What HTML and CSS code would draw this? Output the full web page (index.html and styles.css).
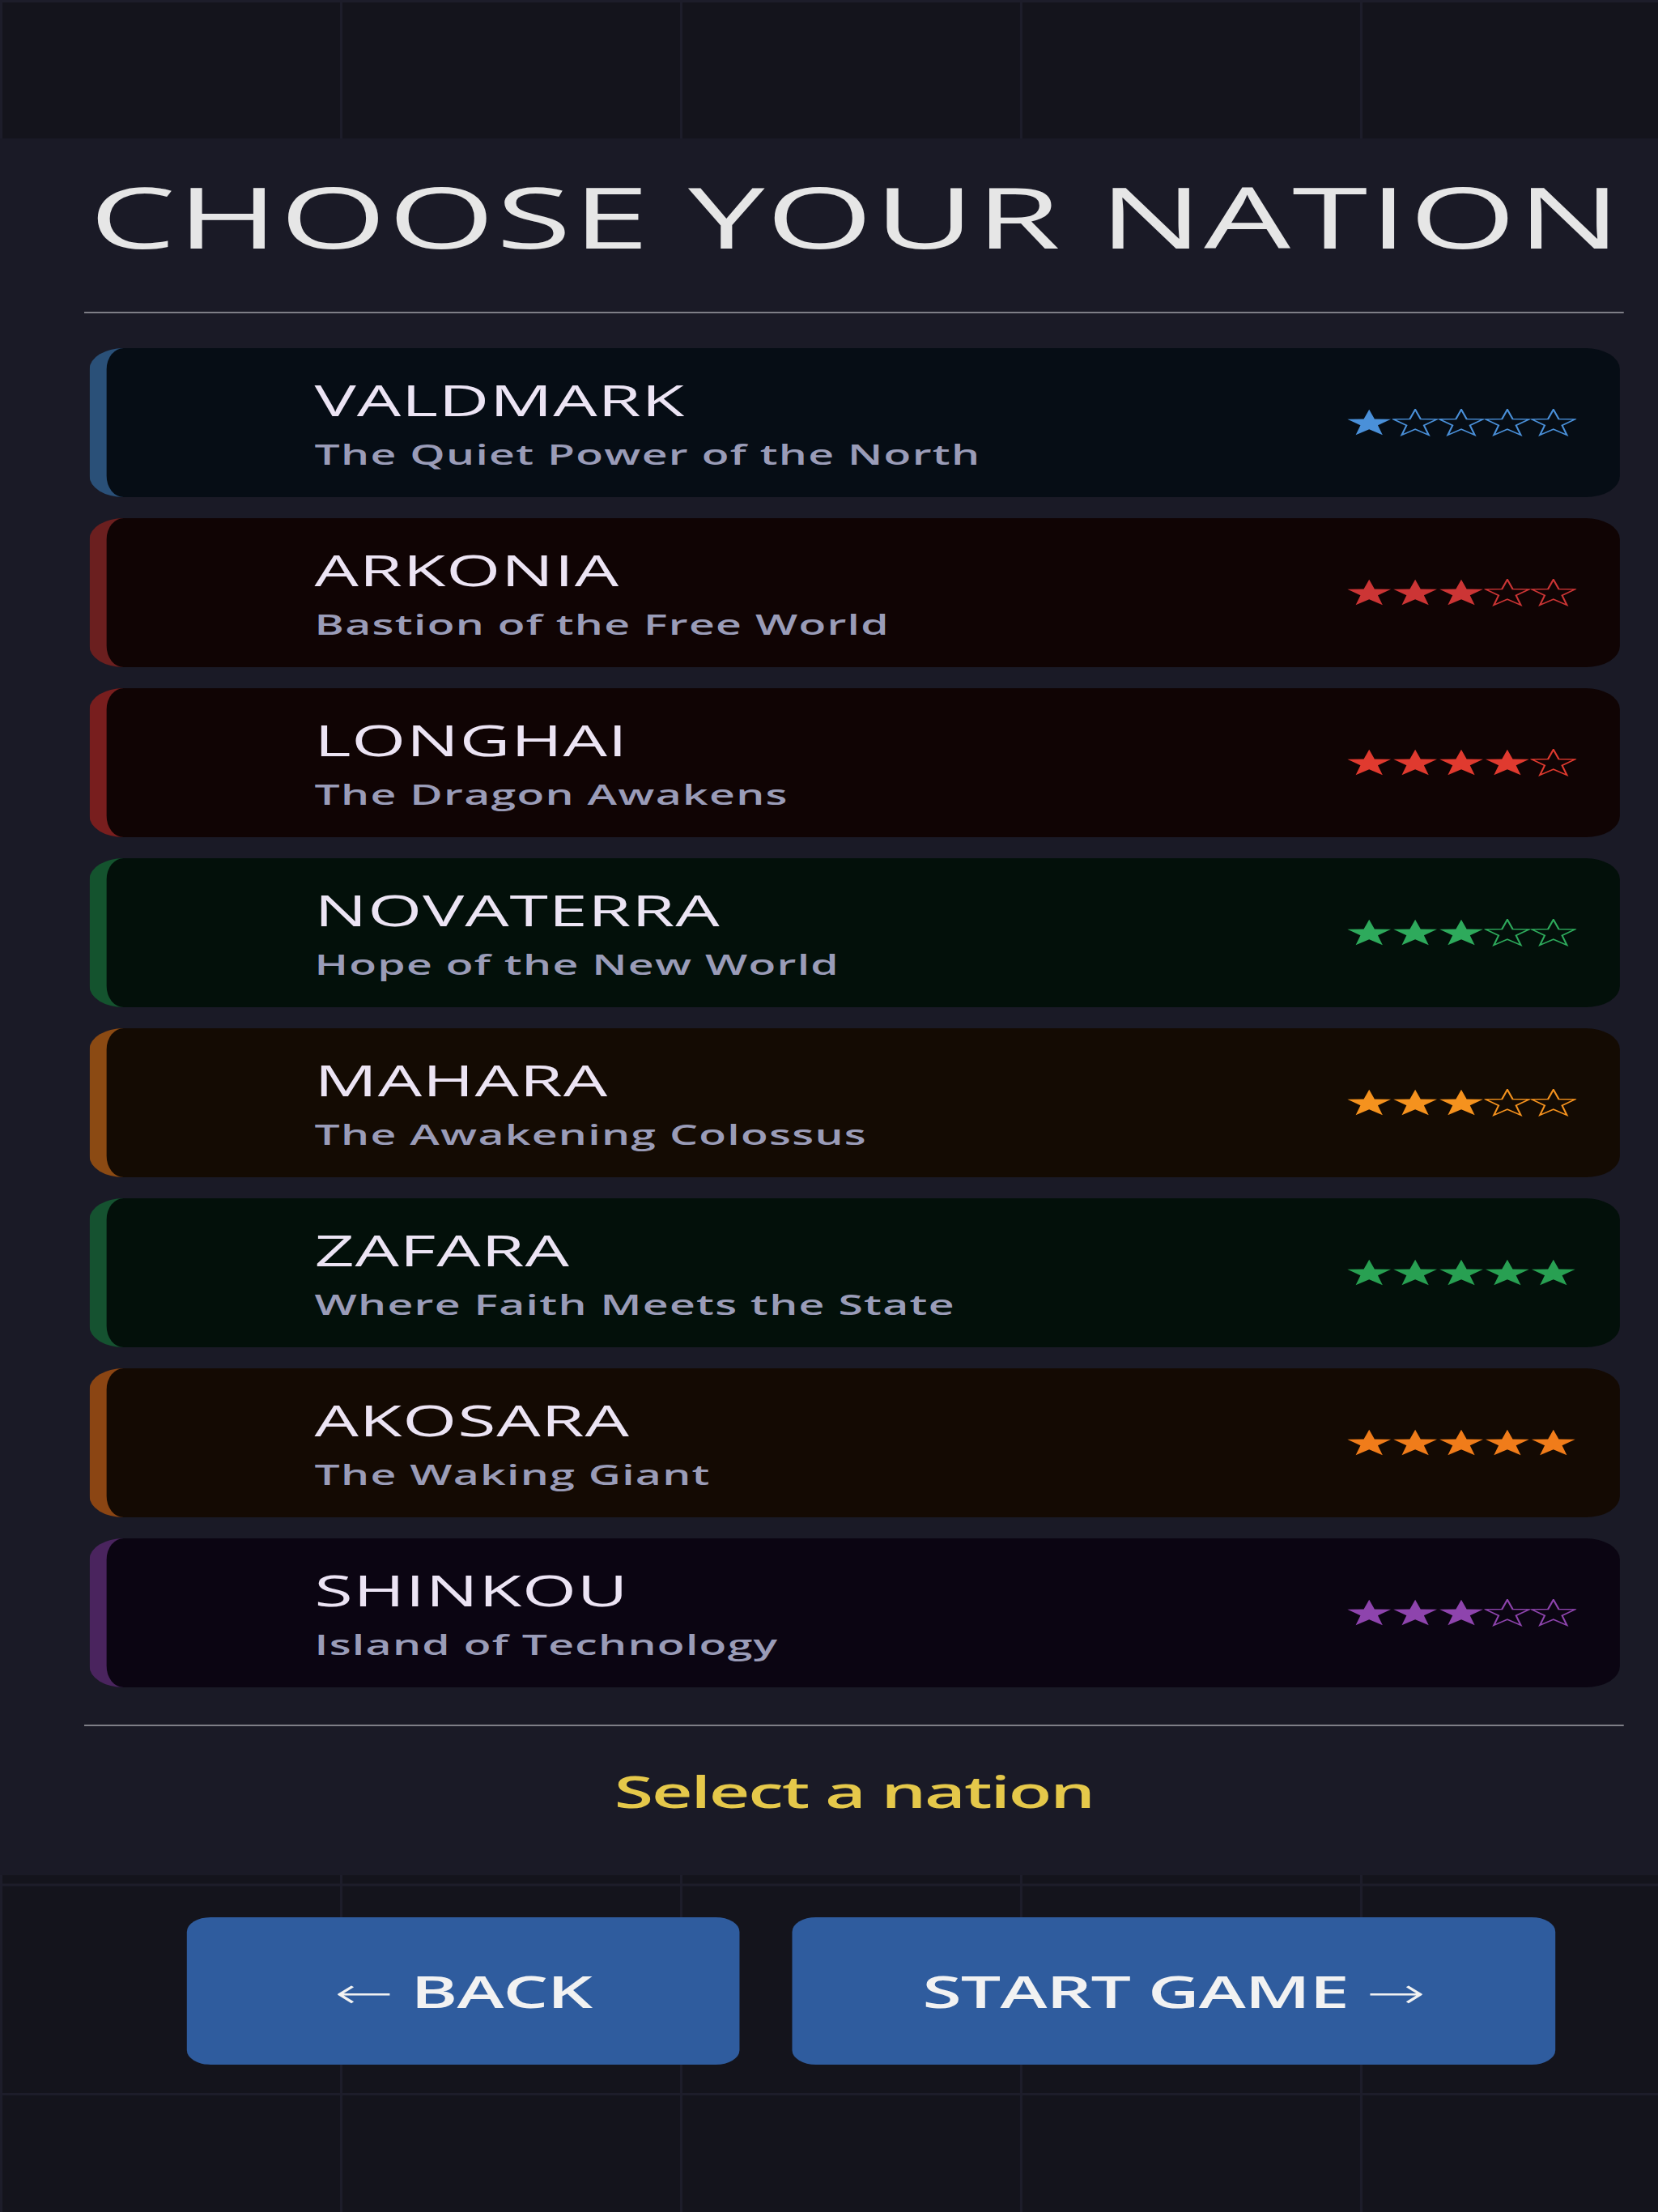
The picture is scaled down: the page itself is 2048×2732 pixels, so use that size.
FILE: index.html
```html
<html>
  <head>
    <link rel="stylesheet" href="styles.css">
  </head>
  <body>
    <svg class="defs" width="0" height="0">
      <symbol id="star" viewBox="0 0 35 34">
        <polygon points="17.5,0.8 21.59,12.57 34.05,12.82 24.12,20.35 27.73,32.28 17.5,25.16 7.27,32.28 10.88,20.35 0.95,12.82 13.41,12.57" />
      </symbol>
    </svg>

    <div class="screen">
      <section class="panel">
        <h1 class="title">CHOOSE YOUR NATION</h1>
        <hr class="rule" />

        <ul class="nations">
          <li class="nation nation-valdmark">
            <div class="nation-text">
              <div class="nation-name">VALDMARK</div>
              <div class="nation-motto">The Quiet Power of the North</div>
            </div>
            <div class="stars">
              <svg class="star on"><use href="#star" /></svg>
              <svg class="star off"><use href="#star" /></svg>
              <svg class="star off"><use href="#star" /></svg>
              <svg class="star off"><use href="#star" /></svg>
              <svg class="star off"><use href="#star" /></svg>
            </div>
          </li>
          <li class="nation nation-arkonia">
            <div class="nation-text">
              <div class="nation-name">ARKONIA</div>
              <div class="nation-motto">Bastion of the Free World</div>
            </div>
            <div class="stars">
              <svg class="star on"><use href="#star" /></svg>
              <svg class="star on"><use href="#star" /></svg>
              <svg class="star on"><use href="#star" /></svg>
              <svg class="star off"><use href="#star" /></svg>
              <svg class="star off"><use href="#star" /></svg>
            </div>
          </li>
          <li class="nation nation-longhai">
            <div class="nation-text">
              <div class="nation-name">LONGHAI</div>
              <div class="nation-motto">The Dragon Awakens</div>
            </div>
            <div class="stars">
              <svg class="star on"><use href="#star" /></svg>
              <svg class="star on"><use href="#star" /></svg>
              <svg class="star on"><use href="#star" /></svg>
              <svg class="star on"><use href="#star" /></svg>
              <svg class="star off"><use href="#star" /></svg>
            </div>
          </li>
          <li class="nation nation-novaterra">
            <div class="nation-text">
              <div class="nation-name">NOVATERRA</div>
              <div class="nation-motto">Hope of the New World</div>
            </div>
            <div class="stars">
              <svg class="star on"><use href="#star" /></svg>
              <svg class="star on"><use href="#star" /></svg>
              <svg class="star on"><use href="#star" /></svg>
              <svg class="star off"><use href="#star" /></svg>
              <svg class="star off"><use href="#star" /></svg>
            </div>
          </li>
          <li class="nation nation-mahara">
            <div class="nation-text">
              <div class="nation-name">MAHARA</div>
              <div class="nation-motto">The Awakening Colossus</div>
            </div>
            <div class="stars">
              <svg class="star on"><use href="#star" /></svg>
              <svg class="star on"><use href="#star" /></svg>
              <svg class="star on"><use href="#star" /></svg>
              <svg class="star off"><use href="#star" /></svg>
              <svg class="star off"><use href="#star" /></svg>
            </div>
          </li>
          <li class="nation nation-zafara">
            <div class="nation-text">
              <div class="nation-name">ZAFARA</div>
              <div class="nation-motto">Where Faith Meets the State</div>
            </div>
            <div class="stars">
              <svg class="star on"><use href="#star" /></svg>
              <svg class="star on"><use href="#star" /></svg>
              <svg class="star on"><use href="#star" /></svg>
              <svg class="star on"><use href="#star" /></svg>
              <svg class="star on"><use href="#star" /></svg>
            </div>
          </li>
          <li class="nation nation-akosara">
            <div class="nation-text">
              <div class="nation-name">AKOSARA</div>
              <div class="nation-motto">The Waking Giant</div>
            </div>
            <div class="stars">
              <svg class="star on"><use href="#star" /></svg>
              <svg class="star on"><use href="#star" /></svg>
              <svg class="star on"><use href="#star" /></svg>
              <svg class="star on"><use href="#star" /></svg>
              <svg class="star on"><use href="#star" /></svg>
            </div>
          </li>
          <li class="nation nation-shinkou">
            <div class="nation-text">
              <div class="nation-name">SHINKOU</div>
              <div class="nation-motto">Island of Technology</div>
            </div>
            <div class="stars">
              <svg class="star on"><use href="#star" /></svg>
              <svg class="star on"><use href="#star" /></svg>
              <svg class="star on"><use href="#star" /></svg>
              <svg class="star off"><use href="#star" /></svg>
              <svg class="star off"><use href="#star" /></svg>
            </div>
          </li>
        </ul>

        <hr class="rule rule-bottom" />
        <p class="status">Select a nation</p>
      </section>

      <div class="actions">
        <button class="btn btn-back"><span class="arrow">&larr;</span> BACK</button>
        <button class="btn btn-start">START GAME <span class="arrow">&rarr;</span></button>
      </div>
    </div>
  </body>
</html>
```

FILE: styles.css
```css
body {
  margin: 0;
  overflow: hidden;
  background-color: #14141c;
  font-family: "Open Sans", "DejaVu Sans", sans-serif;
}

.defs {
  position: absolute;
  width: 0;
  height: 0;
}

/* the whole screen is drawn wide: layout at 1260px, stretched to 2048px */
.screen {
  width: 1260px;
  height: 2732px;
  box-sizing: border-box;
  padding-top: 171px;
  transform: scaleX(1.6254);
  transform-origin: 0 0;
  background-color: #14141c;
  background-image: linear-gradient(to right, #1d1d2a 2px, transparent 2px),
    linear-gradient(to bottom, #1d1d2a 3px, transparent 3px);
  background-size: 258.4px 258.5px;
}

.panel {
  background: #1a1a26;
  padding: 33px 26px 71px 64px;
}

.title {
  margin: 0 0 0 4px;
  font-size: 104px;
  line-height: 125px;
  font-weight: 500;
  letter-spacing: 1.3px;
  color: #e6e6e6;
  white-space: nowrap;
}

.rule {
  height: 2px;
  margin: 56px 0 0;
  border: 0;
  background: #7e7e86;
}

.rule-bottom {
  margin-top: 46px;
}

/* nation list */
.nations {
  list-style: none;
  margin: 43px 3px 0 4px;
  padding: 0;
  display: flex;
  flex-direction: column;
  gap: 26px;
}

.nation {
  height: 184px;
  box-sizing: border-box;
  display: flex;
  align-items: center;
  justify-content: space-between;
  padding: 0 33px 0 158px;
  border-left: 13px solid;
  border-radius: 26px;
}

.nation-name {
  font-size: 53px;
  line-height: 64px;
  font-weight: 500;
  letter-spacing: 0.5px;
  color: #ece4f4;
}

.nation-motto {
  margin-top: 15px;
  font-size: 34px;
  line-height: 41px;
  font-weight: 600;
  letter-spacing: 0.8px;
  color: #9a9cb8;
}

.stars {
  display: flex;
}

.star {
  width: 35px;
  height: 34px;
  overflow: visible;
}

.star.on {
  fill: currentColor;
  stroke: none;
}

.star.off {
  fill: none;
  stroke: currentColor;
  stroke-width: 1.4;
}

.nation-valdmark {
  background: #060d15;
  border-color: #2a5078;
  color: #4a90d9;
}
.nation-arkonia {
  background: #100404;
  border-color: #6b1f1f;
  color: #cc3535;
}
.nation-longhai {
  background: #100404;
  border-color: #781e1e;
  color: #e03a2f;
}
.nation-novaterra {
  background: #03100a;
  border-color: #14532e;
  color: #2eaa5c;
}
.nation-mahara {
  background: #140b03;
  border-color: #8b4a13;
  color: #f5921e;
}
.nation-zafara {
  background: #03100a;
  border-color: #155230;
  color: #28a052;
}
.nation-akosara {
  background: #140a03;
  border-color: #8b4513;
  color: #f07c1a;
}
.nation-shinkou {
  background: #0b0512;
  border-color: #4a245e;
  color: #8e44ad;
}

.status {
  margin: 47px 0 0;
  text-align: center;
  font-size: 54px;
  line-height: 66px;
  font-weight: 600;
  letter-spacing: -1.3px;
  color: #e5c84a;
}

/* bottom buttons */
.actions {
  display: flex;
  gap: 40px;
  padding: 52px 0 0 142px;
}

.btn {
  height: 182px;
  padding: 0;
  border: 0;
  border-radius: 18px;
  background: #2f5c9e;
  color: #f2f2f2;
  font-family: "Open Sans", "DejaVu Sans", sans-serif;
  font-size: 54px;
  font-weight: 600;
  letter-spacing: -0.6px;
}

.btn .arrow {
  font-weight: 300;
}

.btn-back {
  width: 420px;
}

.btn-start {
  width: 580px;
}
```
